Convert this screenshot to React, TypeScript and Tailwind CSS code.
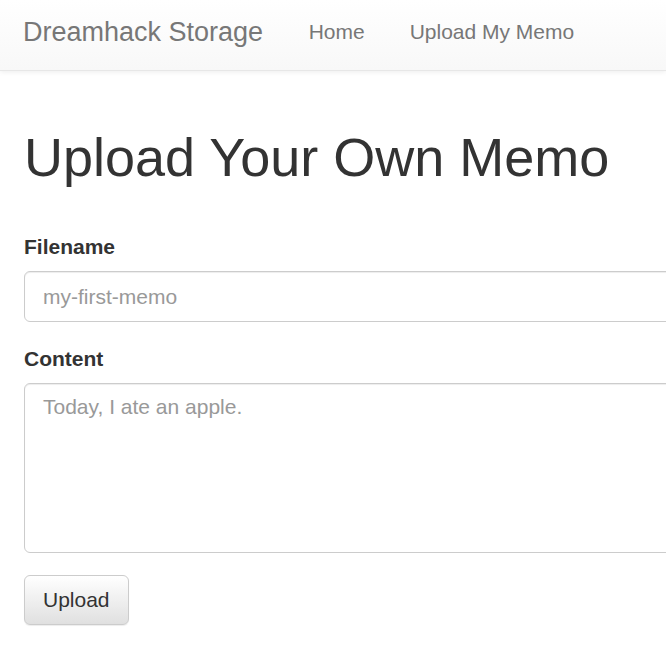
export default function App() {
  return (
    <div className="w-full overflow-hidden bg-white text-[#333] font-['Liberation_Sans',Arial,sans-serif]">
      {/* Navbar */}
      <nav className="h-[71px] border-b border-[#e7e7e7] bg-gradient-to-b from-white to-[#f8f8f8] shadow-[inset_0_1px_0_rgba(255,255,255,0.15),0_1px_5px_rgba(0,0,0,0.075)]">
        <div className="flex items-start pt-[17px] pl-[23px]">
          <a className="text-[27px] leading-[30px] text-[#777] pr-[23px] whitespace-nowrap">Dreamhack Storage</a>
          <a className="text-[21px] leading-[30px] text-[#777] px-[22.5px] whitespace-nowrap">Home</a>
          <a className="text-[21px] leading-[30px] text-[#777] px-[22.5px] whitespace-nowrap">Upload My Memo</a>
        </div>
      </nav>

      <div className="pl-[24px]">
        <h1 className="mt-[57px] text-[54px] leading-[59px] font-normal whitespace-nowrap">Upload Your Own Memo</h1>

        <form className="mt-[45px]">
          <div className="mb-[22px]">
            <label className="block text-[21px] leading-[30px] font-bold mb-[9px]">Filename</label>
            <input
              type="text"
              placeholder="my-first-memo"
              className="block w-[720px] h-[51px] px-[18px] py-[9px] text-[21px] leading-[30px] text-[#555] bg-white border border-[#ccc] rounded-[6px] shadow-[inset_0_1px_1px_rgba(0,0,0,0.075)] outline-none placeholder:text-[#999]"
            />
          </div>
          <div className="mb-[22px]">
            <label className="block text-[21px] leading-[30px] font-bold mb-[9px]">Content</label>
            <textarea
              placeholder="Today, I ate an apple."
              className="block w-[720px] h-[170px] px-[18px] py-[8px] text-[21px] leading-[30px] text-[#555] bg-white border border-[#ccc] rounded-[6px] shadow-[inset_0_1px_1px_rgba(0,0,0,0.075)] outline-none resize-none placeholder:text-[#999]"
            />
          </div>
          <button
            type="button"
            className="h-[50px] px-[18px] text-[21px] leading-[30px] text-[#333] border border-[#ccc] rounded-[6px] bg-gradient-to-b from-white to-[#e0e0e0] shadow-[inset_0_1px_0_rgba(255,255,255,0.15),0_1px_1px_rgba(0,0,0,0.075)]"
          >
            Upload
          </button>
        </form>
        <div className="h-[20px]" />
      </div>
    </div>
  )
}
